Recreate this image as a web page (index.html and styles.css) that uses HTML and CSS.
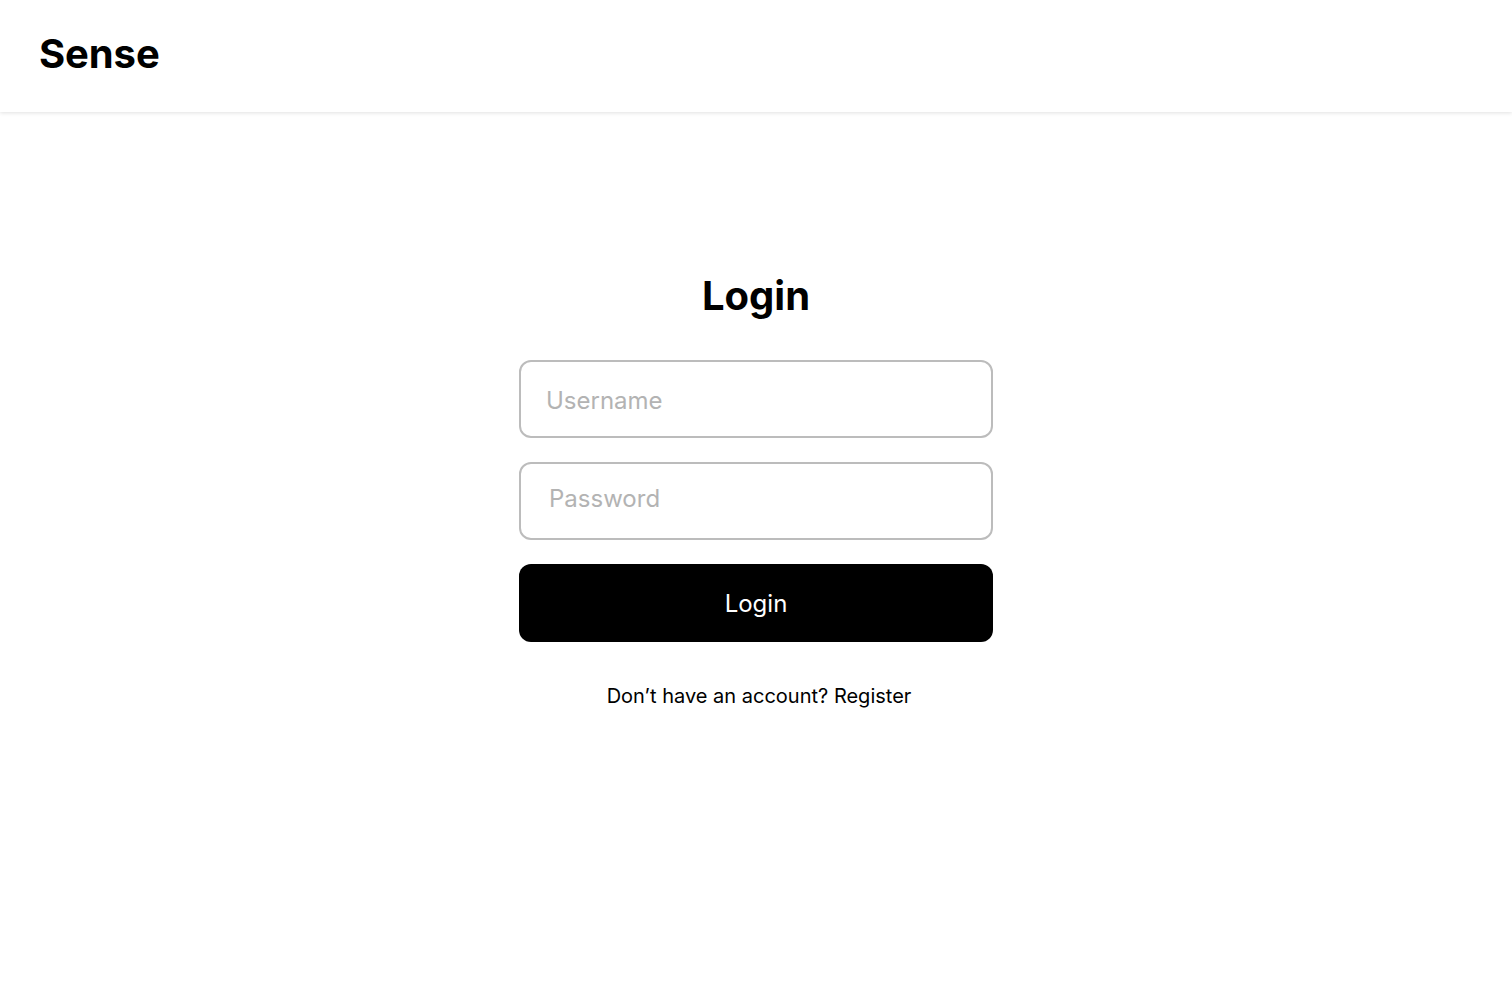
FILE: index.html
```html
<!DOCTYPE html>
<html lang="en">
<head>
    <meta charset="UTF-8">
    <meta name="viewport" content="width=device-width, initial-scale=1.0">
    <title>Sense - Login</title>
    <link rel="stylesheet" href="styles.css">
</head>
<body>
    <header class="header">
        <div class="logo">Sense</div>
    </header>

    <main class="page">
        <form class="login-form" onsubmit="return false">
            <h1 class="title">Login</h1>
            <input class="field field-user" type="text" placeholder="Username">
            <input class="field field-pass" type="password" placeholder="Password">
            <button class="submit" type="submit">Login</button>
            <p class="hint">Don’t have an account? <a href="#">Register</a></p>
        </form>
    </main>
</body>
</html>
```

FILE: styles.css
```css
body {
    font-family: Inter, 'Noto Sans', sans-serif;
    margin: 0;
    background: #fff;
    color: #000;
}
.header {
    height: 112px;
    box-sizing: border-box;
    display: flex;
    align-items: center;
    padding: 0 39px 6px;
    box-shadow: 0 1px 4px rgba(0, 0, 0, 0.12);
}
.logo {
    font-size: 40px;
    font-weight: 700;
    letter-spacing: -0.1px;
}
.page {
    display: flex;
    justify-content: center;
    padding-top: 160px;
}
.login-form {
    width: 474px;
    display: flex;
    flex-direction: column;
    align-items: stretch;
}
.title {
    margin: 0 0 40px;
    font-size: 40px;
    font-weight: 700;
    text-align: center;
    line-height: 48px;
}
.field {
    box-sizing: border-box;
    height: 78px;
    border: 2px solid #bcbcbc;
    border-radius: 12px;
    padding: 0 26px;
    font-family: inherit;
    font-size: 24px;
    color: #000;
    margin-bottom: 24px;
    outline: none;
}
.field-user {
    padding: 2px 25px 0;
}
.field-pass {
    padding: 0 28px 5px;
}
.field::placeholder {
    color: #b3b3b3;
}
.submit {
    height: 78px;
    border: none;
    border-radius: 12px;
    background: #000;
    color: #fff;
    font-family: inherit;
    font-size: 24px;
    cursor: pointer;
}
.hint {
    margin: 42px 0 0;
    text-align: center;
    font-size: 20px;
    padding-left: 6px;
}
.hint a {
    color: inherit;
    text-decoration: none;
}
```
